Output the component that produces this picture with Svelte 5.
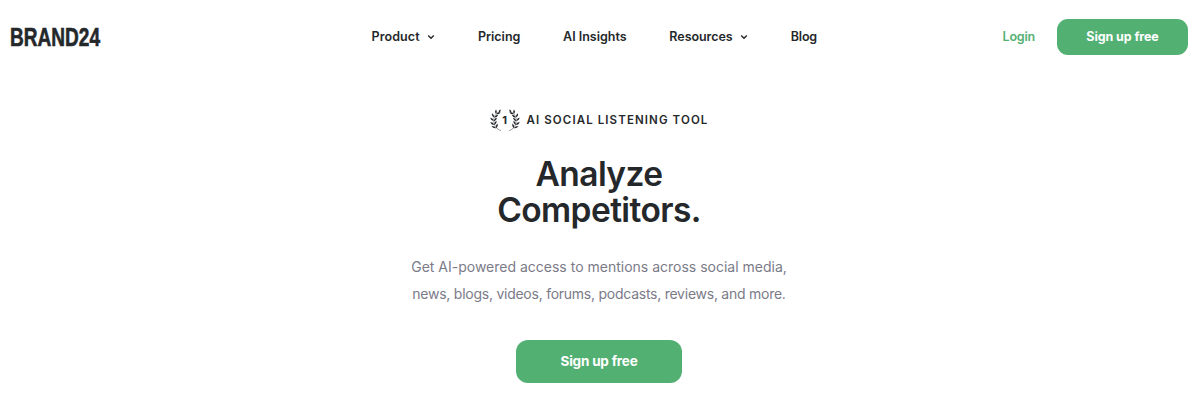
<script lang="ts">
  const NAV = [
    { id: 'product', label: 'Product', menu: true },
    { id: 'pricing', label: 'Pricing', menu: false },
    { id: 'insights', label: 'AI Insights', menu: false },
    { id: 'resources', label: 'Resources', menu: true },
    { id: 'blog', label: 'Blog', menu: false },
  ];

  // leaves of one laurel branch: base point, rotation, length
  const LEAVES = [
    { x: 9, y: 3.6, r: -62, l: 3.6 },
    { x: 6, y: 5, r: -88, l: 4.4 },
    { x: 6.2, y: 5.2, r: -22, l: 4.8 },
    { x: 4.2, y: 8.3, r: -118, l: 4.6 },
    { x: 4.4, y: 8.8, r: -38, l: 5 },
    { x: 3.8, y: 12, r: -135, l: 4.8 },
    { x: 3.8, y: 12.6, r: -50, l: 5 },
    { x: 4.4, y: 15.8, r: -145, l: 5 },
    { x: 4.4, y: 16.2, r: -62, l: 5 },
    { x: 6.4, y: 19.2, r: -155, l: 5.4 },
    { x: 6.4, y: 19.2, r: -75, l: 4.8 },
  ];
</script>

{#snippet branch()}
  <path class="stem" d="M10 2.8C5 4.4 3.4 8.4 3.8 12.2C4.2 16.6 6.6 20.2 11 21.6" />
  {#each LEAVES as leaf}
    <path
      d="M0 0Q{leaf.l / 2} -2 {leaf.l} 0Q{leaf.l / 2} 1.4 0 0Z"
      transform="translate({leaf.x} {leaf.y}) rotate({leaf.r})"
    />
  {/each}
{/snippet}

<header>
  <a class="logo" href="/" aria-label="Brand24">
    <svg width="94" height="28" viewBox="0 0 94 28">
      <text x="0" y="23" textLength="90" lengthAdjust="spacingAndGlyphs">BRAND24</text>
    </svg>
  </a>
  <nav>
    {#each NAV as item (item.id)}
      <a class={item.id} href="/">
        <span>{item.label}</span>
        {#if item.menu}
          <svg width="8" height="6" viewBox="0 0 8 6"><path d="M1.2 1.4L4 4.2L6.8 1.4" /></svg>
        {/if}
      </a>
    {/each}
  </nav>
  <div class="account">
    <a class="login" href="/">Login</a>
    <a class="button small" href="/">Sign up free</a>
  </div>
</header>

<main>
  <div class="eyebrow">
    <svg width="30" height="23" viewBox="0 0 30 23">
      {@render branch()}
      <g transform="translate(30 0) scale(-1 1)">{@render branch()}</g>
      <text x="14.7" y="15.2" text-anchor="middle">1</text>
    </svg>
    <span>AI SOCIAL LISTENING TOOL</span>
  </div>
  <h1>Analyze<br />Competitors.</h1>
  <p>
    <span class="first">Get AI-powered access to mentions across social media,</span><br />
    <span class="second">news, blogs, videos, forums, podcasts, reviews, and more.</span>
  </p>
  <a class="button large" href="/">Sign up free</a>
</main>

<style>
  :global(body) {
    background: #fff;
    color: #25282b;
    font-family: Inter, 'Liberation Sans', sans-serif;
  }
  a {
    color: inherit;
    text-decoration: none;
    white-space: nowrap;
  }
  header {
    display: grid;
    grid-template-columns: 361.5px 1fr auto;
    align-items: center;
    height: 74px;
    padding: 0 12px 0 10px;
    box-sizing: border-box;
  }
  .logo svg {
    display: block;
    overflow: visible;
  }
  .logo text {
    font: 700 25.5px 'Liberation Sans Narrow', 'Liberation Sans', sans-serif;
    fill: #25282b;
    stroke: #25282b;
    stroke-width: 0.6;
  }
  nav {
    display: flex;
    gap: 42.7px;
    padding-bottom: 1px;
    font-size: 12.5px;
    font-weight: 600;
  }
  nav a {
    display: flex;
    align-items: center;
    gap: 7.5px;
  }
  nav .product {
    letter-spacing: 0.1px;
  }
  nav .resources {
    letter-spacing: -0.05px;
  }
  nav .blog {
    letter-spacing: -0.2px;
  }
  nav path {
    fill: none;
    stroke: #25282b;
    stroke-width: 1.4;
  }
  .account {
    display: flex;
    align-items: center;
    gap: 22px;
  }
  .login {
    padding-bottom: 1px;
    color: #53b073;
    font-size: 12.5px;
    font-weight: 600;
    letter-spacing: -0.2px;
  }
  .button {
    display: flex;
    align-items: center;
    justify-content: center;
    background: #53b073;
    color: #fff;
    font-weight: 700;
    box-sizing: border-box;
  }
  .small {
    width: 131px;
    height: 36px;
    padding-bottom: 1px;
    border-radius: 11px;
    font-size: 12.5px;
    letter-spacing: -0.1px;
  }
  main {
    display: flex;
    flex-direction: column;
    align-items: center;
    padding: 35px 2px 0 0;
    text-align: center;
  }
  .eyebrow {
    display: flex;
    align-items: center;
    gap: 7px;
    height: 23px;
    font-size: 11.5px;
    font-weight: 600;
    letter-spacing: 1.1px;
  }
  .eyebrow span {
    padding-bottom: 2px;
  }
  .eyebrow svg {
    fill: #25282b;
  }
  .eyebrow text {
    font-size: 11px;
    font-weight: 700;
    letter-spacing: 0;
  }
  .stem {
    fill: none;
    stroke: #25282b;
    stroke-width: 0.45;
  }
  h1 {
    margin: 24px 0 0;
    font-size: 33.5px;
    font-weight: 600;
    letter-spacing: -0.6px;
    line-height: 36px;
  }
  p {
    margin: 25px 0 0;
    color: #7b7b88;
    font-size: 14px;
    line-height: 27px;
    white-space: nowrap;
  }
  .second {
    letter-spacing: -0.25px;
  }
  .large {
    width: 166px;
    height: 43px;
    margin-top: 33px;
    padding-bottom: 2px;
    border-radius: 12px;
    font-size: 13.5px;
    letter-spacing: -0.2px;
  }
</style>
